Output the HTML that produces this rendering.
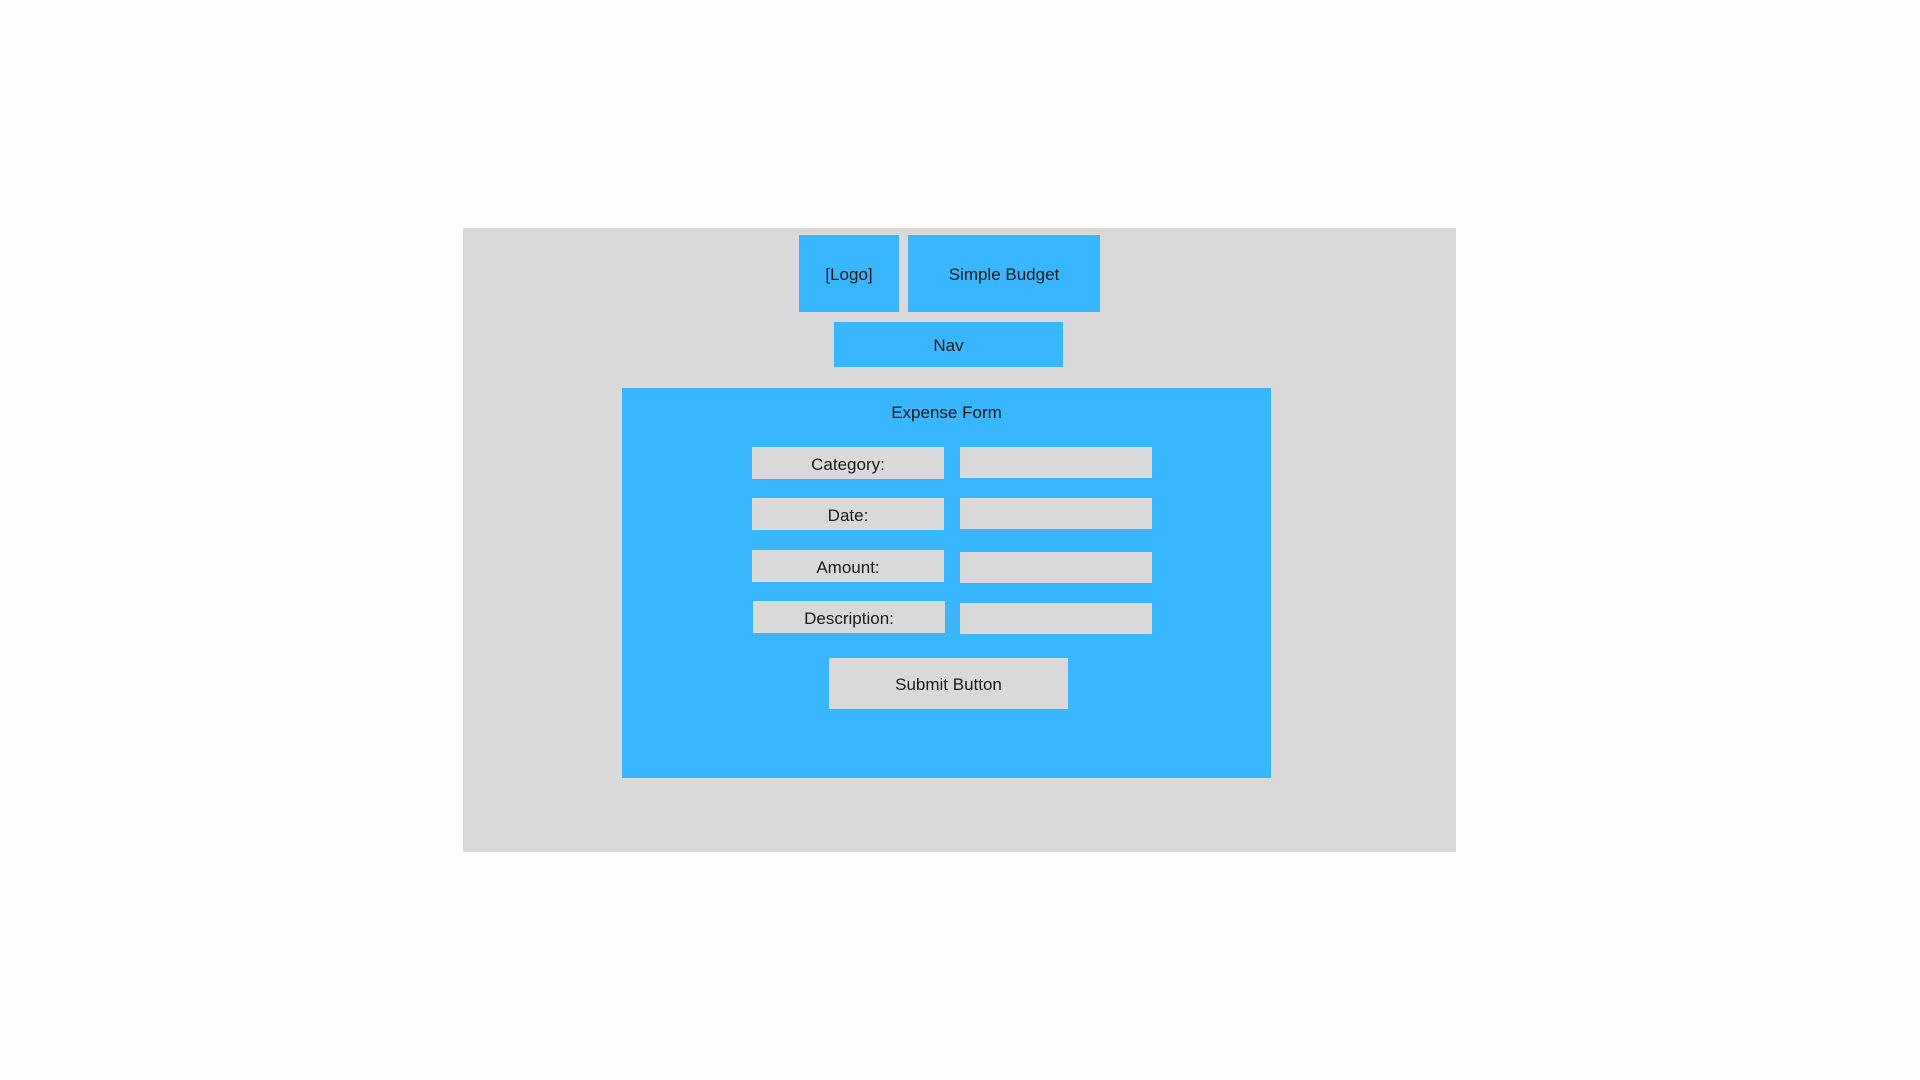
<!DOCTYPE html>
<html><head><meta charset="utf-8"><style>
html,body{margin:0;padding:0;width:1920px;height:1080px;background:#fefefe;overflow:hidden}
div{position:absolute;box-sizing:border-box;display:flex;align-items:center;justify-content:center;font-family:"Liberation Sans",sans-serif;font-size:17px;color:#1a1a1a;padding-top:3px}
.b{background:#38b6ff}.g{background:#d9d9d9}
</style></head><body>
<div class="g" style="left:463px;top:228px;width:993px;height:624px"></div>
<div class="b" style="left:799px;top:235px;width:100px;height:77px">[Logo]</div>
<div class="b" style="left:908px;top:235px;width:192px;height:77px">Simple Budget</div>
<div class="b" style="left:834px;top:322px;width:229px;height:45px">Nav</div>
<div class="b" style="left:622px;top:388px;width:649px;height:390px"></div>
<div style="left:622px;top:398px;width:649px;height:26px">Expense Form</div>
<div class="g" style="left:752px;top:447px;width:192px;height:32px">Category:</div>
<div class="g" style="left:960px;top:447px;width:192px;height:31px"></div>
<div class="g" style="left:752px;top:498px;width:192px;height:32px">Date:</div>
<div class="g" style="left:960px;top:498px;width:192px;height:31px"></div>
<div class="g" style="left:752px;top:550px;width:192px;height:32px">Amount:</div>
<div class="g" style="left:960px;top:552px;width:192px;height:31px"></div>
<div class="g" style="left:753px;top:601px;width:192px;height:32px">Description:</div>
<div class="g" style="left:960px;top:603px;width:192px;height:31px"></div>
<div class="g" style="left:829px;top:658px;width:239px;height:51px">Submit Button</div>
</body></html>
